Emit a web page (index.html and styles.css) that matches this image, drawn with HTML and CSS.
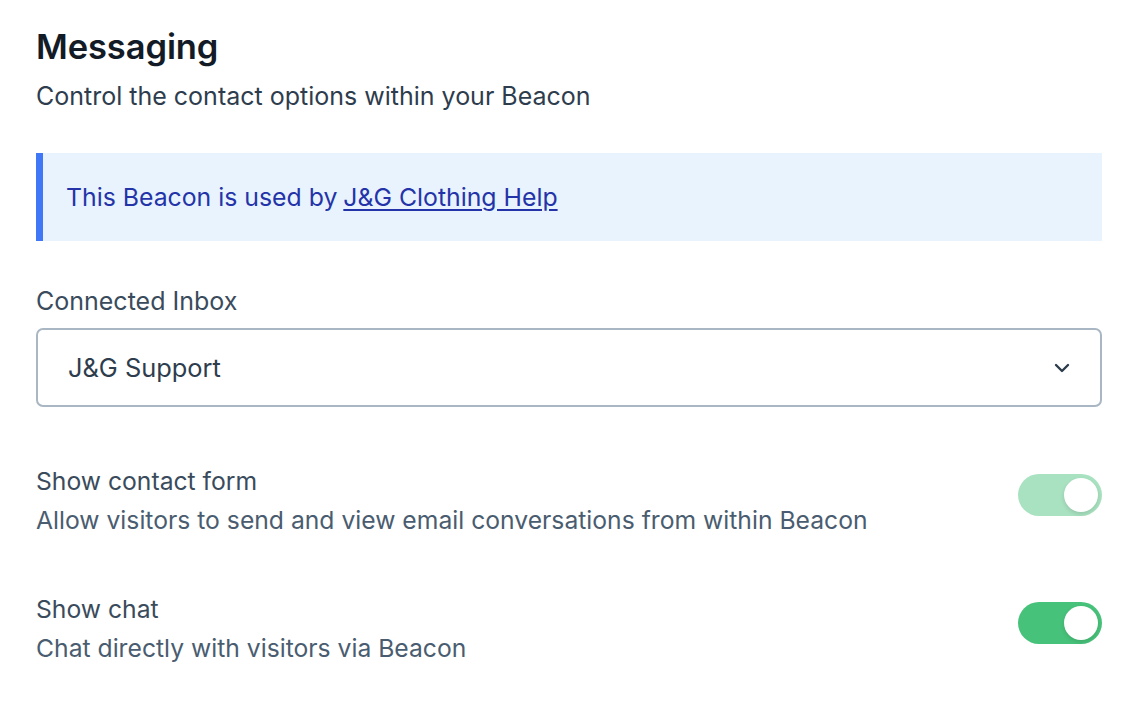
FILE: index.html
```html
<!DOCTYPE html>
<html>
<head>
<meta charset="utf-8">
<link rel="stylesheet" href="styles.css">
</head>
<body>
<main class="page">
  <h1 class="title">Messaging</h1>
  <p class="subtitle">Control the contact options within your Beacon</p>

  <div class="notice">This Beacon is used by <a href="#" class="notice-link">J&amp;G Clothing Help</a></div>

  <label class="field-label">Connected Inbox</label>
  <div class="select">
    <span class="select-value">J&amp;G Support</span>
    <svg class="chevron" width="16" height="10" viewBox="0 0 16 10"><path d="M2 2 L8 8 L14 2" fill="none" stroke="#2d3c4c" stroke-width="2.4" stroke-linecap="round" stroke-linejoin="round"/></svg>
  </div>

  <div class="option">
    <div class="option-text">
      <div class="option-title">Show contact form</div>
      <div class="option-desc">Allow visitors to send and view email conversations from within Beacon</div>
    </div>
    <div class="toggle toggle-light"><span class="knob"></span></div>
  </div>

  <div class="option">
    <div class="option-text">
      <div class="option-title">Show chat</div>
      <div class="option-desc">Chat directly with visitors via Beacon</div>
    </div>
    <div class="toggle toggle-on"><span class="knob"></span></div>
  </div>
</main>
</body>
</html>
```

FILE: styles.css
```css
html, body {
  margin: 0;
  padding: 0;
  background: #ffffff;
}
body {
  font-family: Inter, "Noto Sans", "Liberation Sans", sans-serif;
  color: #3c4d5e;
}
.page {
  padding: 27px 46px 0 36px;
  display: flex;
  flex-direction: column;
}
.title {
  margin: 0;
  font-size: 34.5px;
  font-weight: 600;
  line-height: 40px;
  color: #131b26;
  letter-spacing: -0.1px;
}
.subtitle {
  margin: 14px 0 0;
  font-size: 25px;
  line-height: 30px;
  color: #2e3d4d;
}
.notice {
  margin-top: 42px;
  height: 88px;
  display: flex;
  align-items: center;
  box-sizing: border-box;
  padding-left: 23px;
  background: #e8f3fe;
  border-left: 7px solid #4077f6;
  font-size: 24.8px;
  color: #2434a8;
}
.notice-link {
  color: #2434a8;
  margin-left: 6px;
  text-decoration: underline;
  text-underline-offset: 3px;
  text-decoration-thickness: 1.5px;
}
.field-label {
  margin-top: 45px;
  font-size: 25px;
  line-height: 30px;
  color: #3a4b5c;
}
.select {
  margin-top: 12px;
  height: 79px;
  box-sizing: border-box;
  border: 2px solid #a9b6c3;
  border-radius: 7px;
  display: flex;
  align-items: center;
  justify-content: space-between;
  padding: 0 30px 0 30px;
}
.select-value {
  font-size: 25.4px;
  color: #2e3d4d;
}
.chevron {
  display: block;
}
.option {
  display: flex;
  align-items: flex-start;
  justify-content: space-between;
  margin-top: 59px;
}
.option-text {
  display: flex;
  flex-direction: column;
  gap: 9px;
}
.option-title {
  font-size: 24.7px;
  line-height: 30px;
  color: #3a4b5c;
}
.option-desc {
  font-size: 24.7px;
  line-height: 30px;
  color: #4a5d70;
}
.toggle {
  margin-top: 8px;
  width: 84px;
  height: 42px;
  border-radius: 21px;
  position: relative;
  flex: none;
}
.toggle-light { background: #a8e2c0; }
.toggle-on { background: #47c27a; }
.knob {
  position: absolute;
  top: 4px;
  right: 4px;
  width: 34px;
  height: 34px;
  border-radius: 50%;
  background: #ffffff;
  box-shadow: 0 2px 4px rgba(0,0,0,0.12);
}
```
